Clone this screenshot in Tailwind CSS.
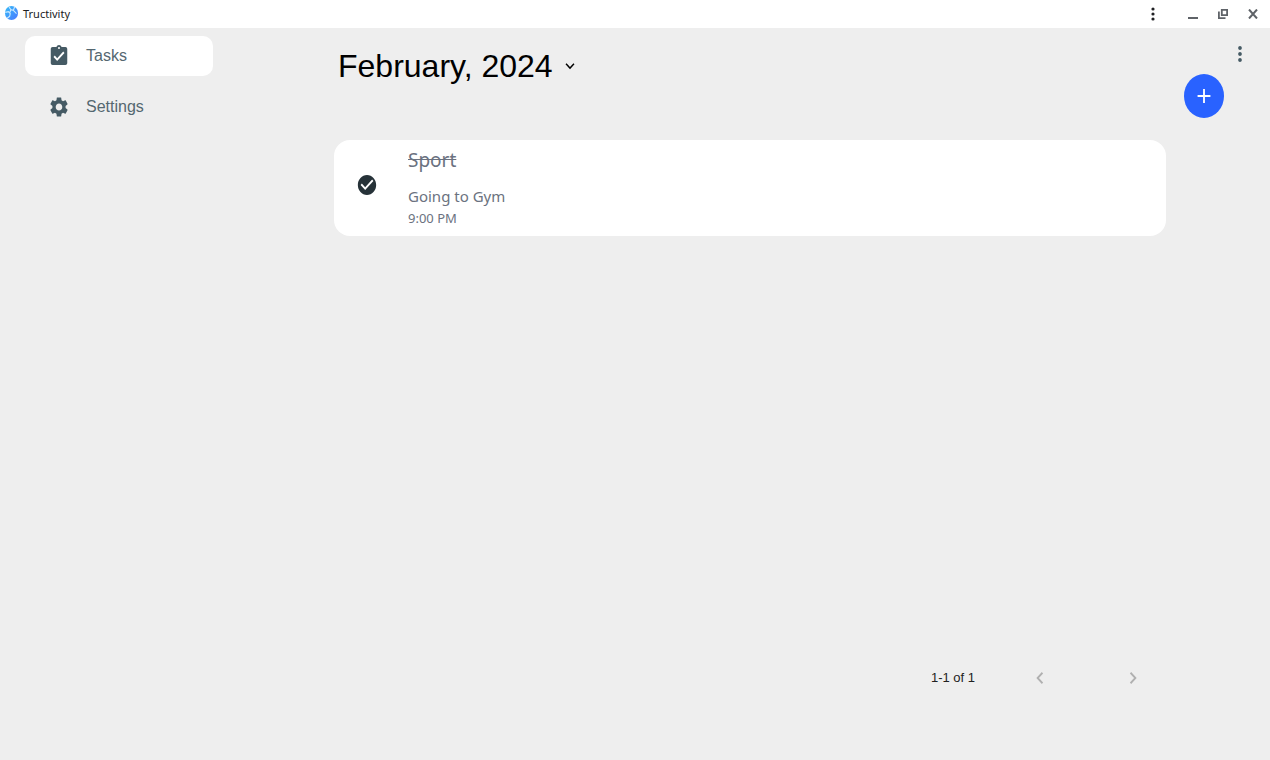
<!DOCTYPE html>
<html lang="en">
<head>
  <meta charset="UTF-8" />
  <meta name="viewport" content="width=device-width, initial-scale=1.0"/>
  <title>Tructivity</title>
  <script src="https://cdn.jsdelivr.net/npm/@tailwindcss/browser@4"></script>
</head>
<body class="min-h-screen flex flex-col bg-[#eeeeee] font-['Liberation_Sans',sans-serif]">
  <!-- window title bar -->
  <header class="h-7 shrink-0 bg-white flex items-center justify-between pl-1 pr-[7px]">
    <div class="flex items-center gap-1">
      <svg class="w-[15px] h-4 -mt-0.5" viewBox="0 0 24 24" preserveAspectRatio="none" aria-hidden="true">
        <defs>
          <linearGradient id="globe" x1="0" y1="0" x2="1" y2="1">
            <stop offset="0" stop-color="#35bdf8"/>
            <stop offset="1" stop-color="#4a78ff"/>
          </linearGradient>
        </defs>
        <circle cx="12" cy="12" r="10.5" fill="url(#globe)"/>
        <path d="M8 3l3 4 4 1 2-5M2 11l5-1 3 3-1 4-4 3M11 7l-2 5M15 8l5 5" fill="none" stroke="#c9e8ff" stroke-width="1.8"/>
      </svg>
      <span class="font-['Noto_Sans',sans-serif] text-[11px] text-[#202124]">Tructivity</span>
    </div>
    <div class="flex items-center text-[#5f6368]">
      <button type="button" aria-label="App menu" class="w-5 h-5 mr-5 flex items-center justify-center text-[#202124]">
        <svg class="w-1 h-[14px]" viewBox="0 0 4 14" fill="currentColor"><circle cx="2" cy="2" r="1.6"/><circle cx="2" cy="7" r="1.6"/><circle cx="2" cy="12" r="1.6"/></svg>
      </button>
      <button type="button" aria-label="Minimize" class="w-5 h-5 mr-[10px] flex items-center justify-center">
        <svg class="w-[10px] h-[10px]" viewBox="0 0 10 10" fill="none" stroke="currentColor" stroke-width="2"><path d="M0 9h10"/></svg>
      </button>
      <button type="button" aria-label="Restore" class="w-5 h-5 mr-[10px] flex items-center justify-center">
        <svg class="w-[10px] h-[10px]" viewBox="0 0 10 10" fill="none" stroke="currentColor" stroke-width="1.8"><path d="M3.800 .9h5.300v5.300H3.800zM.9 2.500v6.600h6.600"/></svg>
      </button>
      <button type="button" aria-label="Close" class="w-5 h-5 flex items-center justify-center">
        <svg class="w-[10px] h-[10px]" viewBox="0 0 10 10" fill="none" stroke="currentColor" stroke-width="2"><path d="M1 .5l8 9M9 .5l-8 9"/></svg>
      </button>
    </div>
  </header>

  <div class="flex-1 flex">
    <nav class="w-[334px] shrink-0 pl-[25px] pt-2 flex flex-col gap-[10px] text-base text-[#546770]">
      <a href="#tasks" aria-current="page" class="w-[188px] h-10 pl-[23px] flex items-center gap-4 rounded-[10px] bg-white">
        <svg class="w-[22px] h-6 text-[#455a64]" viewBox="0 0 24 24" preserveAspectRatio="none" fill="currentColor" aria-hidden="true"><path d="M19 3h-4.180C14.400 1.840 13.300 1 12 1s-2.400.84-2.820 2H5c-1.100 0-2 .9-2 2v14c0 1.100.9 2 2 2h14c1.100 0 2-.9 2-2V5c0-1.100-.9-2-2-2zm-7 0c.55 0 1 .45 1 1s-.45 1-1 1-1-.45-1-1 .45-1 1-1zm-2 14l-4-4 1.410-1.410L10 14.170l6.590-6.590L18 9l-8 8z"/></svg>
        <span>Tasks</span>
      </a>
      <a href="#settings" class="w-[188px] h-[41px] pl-[23px] flex items-center gap-4 rounded-[10px]">
        <svg class="w-[22px] h-6 text-[#455a64]" viewBox="0 0 24 24" preserveAspectRatio="none" fill="currentColor" aria-hidden="true"><path d="M19.140 12.940c.04-.3.060-.61.060-.94 0-.32-.020-.64-.070-.94l2.030-1.580c.18-.14.230-.41.120-.61l-1.920-3.320c-.12-.22-.37-.29-.59-.22l-2.390.96c-.5-.38-1.030-.7-1.620-.94l-.36-2.540c-.04-.24-.24-.41-.48-.41h-3.840c-.24 0-.43.170-.47.410l-.36 2.540c-.59.240-1.130.570-1.620.940l-2.390-.96c-.22-.08-.47 0-.59.220L2.740 8.870c-.12.210-.08.470.120.610l2.030 1.580c-.05.300-.09.630-.09.940s.020.640.070.940l-2.030 1.580c-.18.140-.23.410-.12.610l1.920 3.320c.12.220.37.290.59.220l2.390-.96c.5.380 1.030.7 1.620.94l.36 2.540c.05.240.24.410.48.410h3.840c.24 0 .44-.17.470-.41l.36-2.540c.59-.24 1.130-.56 1.620-.94l2.390.96c.22.080.47 0 .59-.22l1.920-3.320c.12-.22.070-.47-.12-.61l-2.010-1.580zM12 15.600c-1.980 0-3.600-1.620-3.600-3.600s1.620-3.600 3.600-3.600 3.600 1.620 3.600 3.600-1.620 3.600-3.600 3.600z"/></svg>
        <span>Settings</span>
      </a>
    </nav>

    <main class="flex-1 flex flex-col pt-4">
      <button type="button" class="self-start h-11 ml-1 flex items-center gap-2 text-[32px] text-black">
        <span>February, 2024</span>
        <svg class="w-[18px] h-5" viewBox="0 0 24 24" preserveAspectRatio="none" fill="currentColor" aria-hidden="true"><path d="M16.590 8.590L12 13.170 7.410 8.590 6 10l6 6 6-6z"/></svg>
      </button>

      <article class="mt-[52px] h-24 rounded-2xl bg-white pl-[22px] flex items-center gap-[30px] font-['Noto_Sans',sans-serif] text-[#6b7280]">
        <button type="button" aria-label="Task completed" class="pb-1.5 text-[#263238]">
          <svg class="w-[22px] h-6" viewBox="0 0 24 24" preserveAspectRatio="none" fill="currentColor"><path d="M12 2C6.480 2 2 6.480 2 12s4.480 10 10 10 10-4.480 10-10S17.520 2 12 2zm-2 15l-5-5 1.410-1.410L10 14.170l7.590-7.590L19 8l-9 9z"/></svg>
        </button>
        <div>
          <h2 class="text-[19px] leading-6 line-through">Sport</h2>
          <p class="mt-3 text-[15px] leading-6">Going to Gym</p>
          <p class="text-[13px] leading-5">9:00 PM</p>
        </div>
      </article>

      <footer class="mt-auto mb-[62px] h-10 pr-[22px] flex items-center justify-end text-[13px] text-[#212121]">
        <span class="mr-[54px]">1-1 of 1</span>
        <button type="button" aria-label="Previous page" disabled class="mr-[71px] text-[#b0b0b0]">
          <svg class="w-[22px] h-6" viewBox="0 0 24 24" preserveAspectRatio="none" fill="currentColor"><path d="M15.410 7.410L14 6l-6 6 6 6 1.410-1.410L10.830 12z"/></svg>
        </button>
        <button type="button" aria-label="Next page" disabled class="text-[#b0b0b0]">
          <svg class="w-[22px] h-6" viewBox="0 0 24 24" preserveAspectRatio="none" fill="currentColor"><path d="M10 6L8.590 7.410 13.170 12l-4.580 4.590L10 18l6-6z"/></svg>
        </button>
      </footer>
    </main>

    <aside class="w-[104px] shrink-0 pt-[14px] pl-[18px] flex flex-col gap-2 items-start">
      <button type="button" aria-label="More options" class="ml-[45px] text-[#455a64]">
        <svg class="w-[22px] h-6" viewBox="0 0 24 24" preserveAspectRatio="none" fill="currentColor"><path d="M12 8c1.100 0 2-.9 2-2s-.9-2-2-2-2 .9-2 2 .9 2 2 2zm0 2c-1.100 0-2 .9-2 2s.9 2 2 2 2-.9 2-2-.9-2-2-2zm0 6c-1.100 0-2 .9-2 2s.9 2 2 2 2-.9 2-2-.9-2-2-2z"/></svg>
      </button>
      <button type="button" aria-label="Add task" class="w-10 h-11 rounded-[50%] bg-[#2962ff] text-white flex items-center justify-center">
        <svg class="w-[22px] h-6" viewBox="0 0 24 24" preserveAspectRatio="none" fill="currentColor"><path d="M19 13h-6v6h-2v-6H5v-2h6V5h2v6h6v2z"/></svg>
      </button>
    </aside>
  </div>
</body>
</html>
